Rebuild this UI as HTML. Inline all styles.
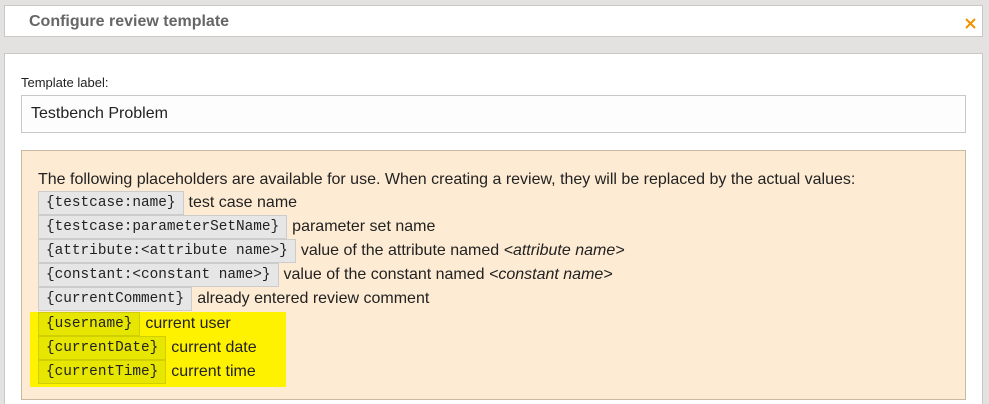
<!DOCTYPE html>
<html><head><style>
html,body{margin:0;width:989px;height:404px;overflow:hidden}
body{background:#e4e2e0;font-family:"Liberation Sans",Arial,sans-serif;position:relative}
.hdr{position:absolute;left:4px;top:5px;width:977px;height:30px;background:#fff;border:1px solid #c8c8c8}
.hdr h1{margin:0;position:absolute;left:24px;top:7px;font-size:16px;font-weight:bold;color:#666}
.x{position:absolute;left:965px;top:18px}
.panel{position:absolute;left:4px;top:53px;width:977px;height:351px;background:#fff;border:1px solid #c8c8c8;border-bottom:none}
.lbl{position:absolute;left:21px;top:75px;font-size:13px;color:#222}
.inp{position:absolute;left:21px;top:95px;width:943px;height:36px;background:#fdfdfd;border:1px solid #c8c8c8;font-size:16px;color:#222;line-height:36px;text-indent:9px}
.box{position:absolute;left:21px;top:150px;width:943px;height:248px;background:#fdebd3;border:1px solid #c9b9a4}
.t{position:absolute;left:38px;font-size:16px;color:#222;white-space:nowrap}
.row{position:absolute;left:38px;height:24px;display:flex;align-items:center;font-size:16px;color:#222;white-space:nowrap}
.c{font-family:"Liberation Mono","DejaVu Sans Mono",monospace;font-size:14.4px;background:#e6e6e6;border:1px solid #ccc;padding:0 7px;height:22px;line-height:22px;margin-right:5px;color:#222}
.hl{position:absolute;left:30px;top:312px;width:256px;height:75px;background:#fff200}
.y .c{background:#e6e600;border-color:#d0d000}
</style></head><body>
<div class="hdr"><h1>Configure review template</h1></div>
<svg class="x" width="11" height="11" viewBox="0 0 11 11"><path d="M1 1L10 10M10 1L1 10" stroke="#f29100" stroke-width="2"/></svg>
<div class="panel"></div>
<div class="lbl">Template label:</div>
<div class="inp">Testbench Problem</div>
<div class="box"></div>
<div class="hl"></div>
<div class="t" style="top:171px">The following placeholders are available for use. When creating a review, they will be replaced by the actual values:</div>
<div class="row" style="top:191px"><span class="c">{testcase:name}</span>test case name</div>
<div class="row" style="top:215px"><span class="c">{testcase:parameterSetName}</span>parameter set name</div>
<div class="row" style="top:239px"><span class="c">{attribute:&lt;attribute name&gt;}</span>value of the attribute named&nbsp;<i>&lt;attribute name&gt;</i></div>
<div class="row" style="top:263px"><span class="c">{constant:&lt;constant name&gt;}</span>value of the constant named&nbsp;<i>&lt;constant name&gt;</i></div>
<div class="row" style="top:287px"><span class="c">{currentComment}</span>already entered review comment</div>
<div class="row y" style="top:312px"><span class="c">{username}</span>current user</div>
<div class="row y" style="top:336px"><span class="c">{currentDate}</span>current date</div>
<div class="row y" style="top:360px"><span class="c">{currentTime}</span>current time</div>
</body></html>
